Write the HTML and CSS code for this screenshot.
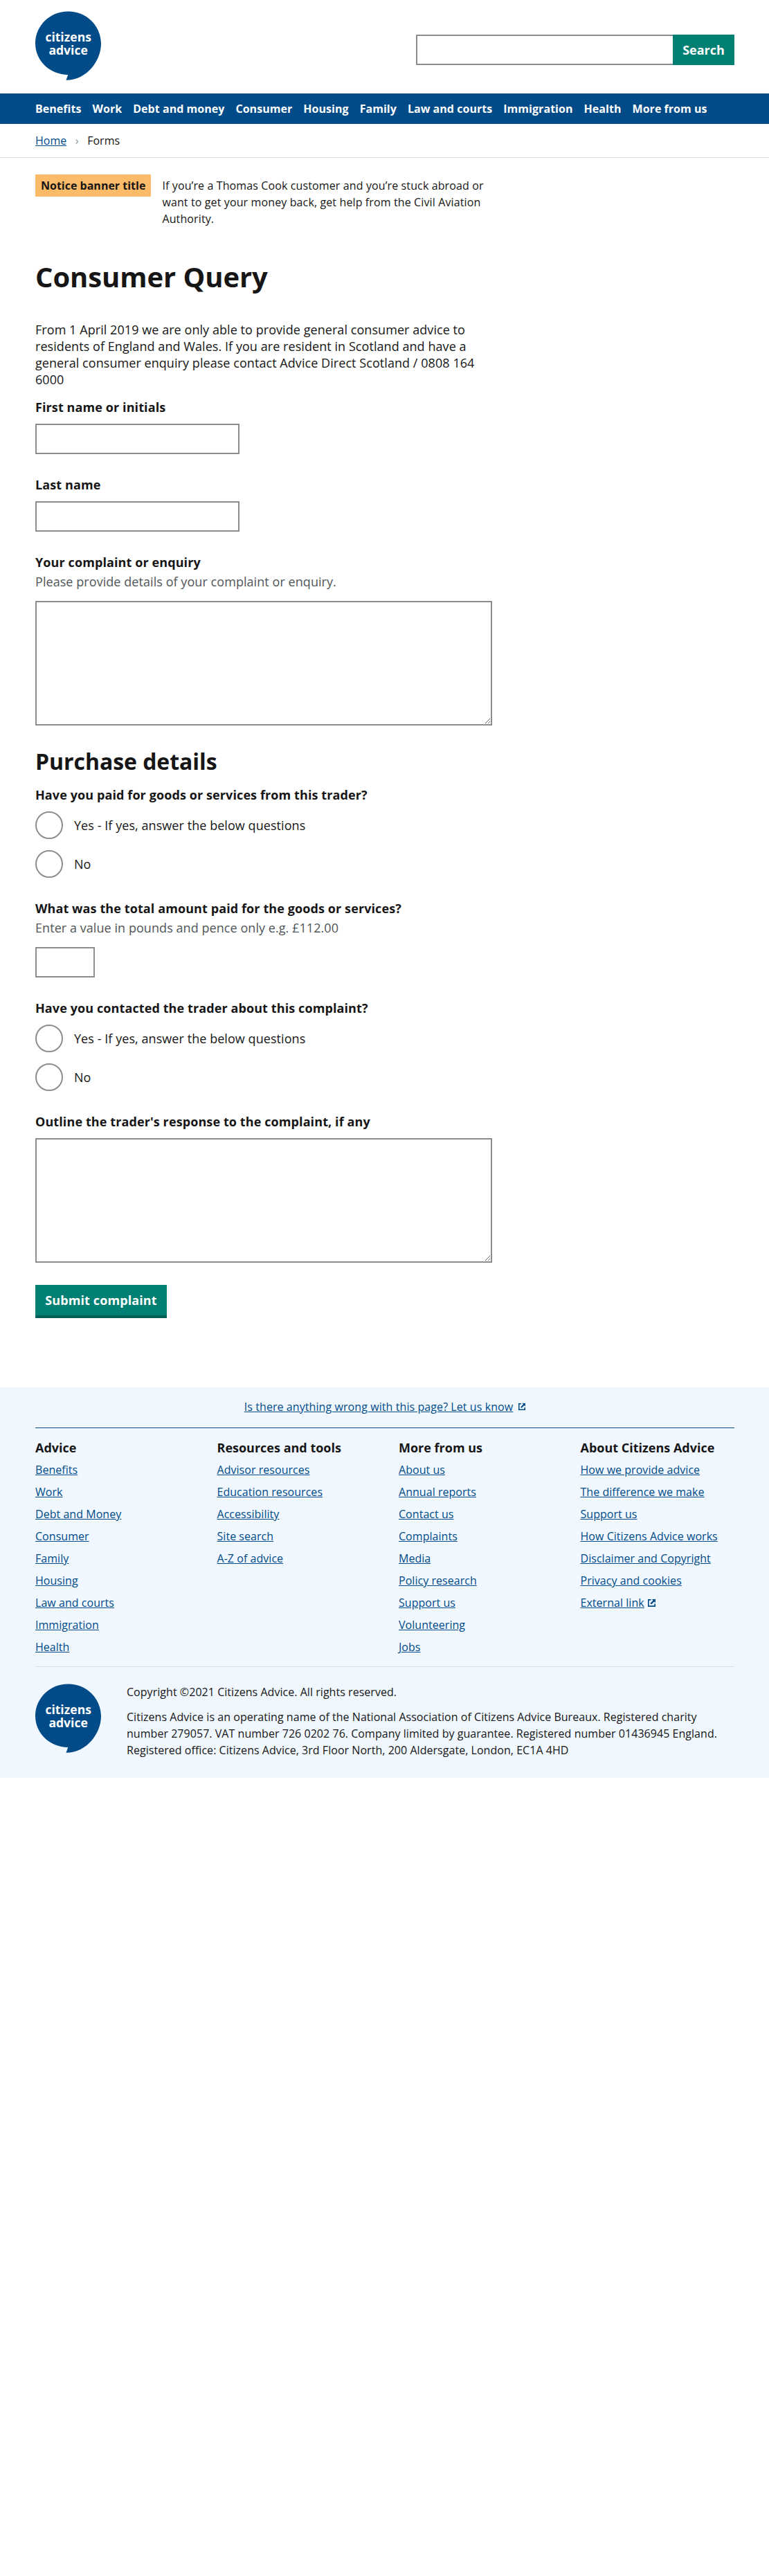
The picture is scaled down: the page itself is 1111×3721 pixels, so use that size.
FILE: index.html
```html
<!DOCTYPE html>
<html lang="en">
<head>
<meta charset="utf-8">
<title>Consumer Query</title>
<link rel="stylesheet" href="styles.css">
</head>
<body>
<header class="header container">
  <a href="#" class="logo-link"><svg class="logo" viewBox="0 0 95 100" role="img" aria-label="Citizens Advice">
    <path fill="#004b88" d="M47.5 0.4C73.7 0.4 95 20.8 95 47.3C95 71 75 99.8 44.5 99.8L47.3 92C20.5 92 0 71 0 46.8C0 21 21 0.4 47.5 0.4Z"/>
    <text x="14.4" y="44" textLength="66.5" lengthAdjust="spacingAndGlyphs">citizens</text>
    <text x="19.4" y="62.5" textLength="56.5" lengthAdjust="spacingAndGlyphs">advice</text>
  </svg></a>
  <form class="search">
    <input class="search-input" type="search" aria-label="Search">
    <button class="search-button" type="button">Search</button>
  </form>
</header>

<nav class="nav">
  <div class="nav-list container">
    <a href="#">Benefits</a><a href="#">Work</a><a href="#">Debt and money</a><a href="#">Consumer</a><a href="#">Housing</a><a href="#">Family</a><a href="#">Law and courts</a><a href="#">Immigration</a><a href="#">Health</a><a href="#">More from us</a>
  </div>
</nav>

<div class="breadcrumbs">
  <div class="container crumb-list"><a href="#">Home</a><span class="crumb-sep">›</span><span>Forms</span></div>
</div>

<main class="container">
  <div class="notice">
    <strong class="notice-title">Notice banner title</strong>
    <p class="notice-body">If you’re a Thomas Cook customer and you’re stuck abroad or want to get your money back, get help from the Civil Aviation Authority.</p>
  </div>

  <h1 class="title">Consumer Query</h1>

  <form class="form">
    <p class="intro">From 1 April 2019 we are only able to provide general consumer advice to residents of England and Wales. If you are resident in Scotland and have a general consumer enquiry please contact Advice Direct Scotland / 0808 164 6000</p>

    <div class="field">
      <label class="label" for="first">First name or initials</label>
      <input class="input" id="first" type="text">
    </div>
    <div class="field">
      <label class="label" for="last">Last name</label>
      <input class="input" id="last" type="text">
    </div>
    <div class="field">
      <label class="label" for="complaint">Your complaint or enquiry</label>
      <p class="hint">Please provide details of your complaint or enquiry.</p>
      <textarea class="textarea" id="complaint"></textarea>
    </div>

    <h2 class="subtitle">Purchase details</h2>

    <fieldset class="field">
      <legend class="label">Have you paid for goods or services from this trader?</legend>
      <label class="radio"><input type="radio" name="paid">Yes - If yes, answer the below questions</label>
      <label class="radio"><input type="radio" name="paid">No</label>
    </fieldset>
    <div class="field">
      <label class="label" for="amount">What was the total amount paid for the goods or services?</label>
      <p class="hint">Enter a value in pounds and pence only e.g. £112.00</p>
      <input class="input input-short" id="amount" type="text">
    </div>
    <fieldset class="field">
      <legend class="label">Have you contacted the trader about this complaint?</legend>
      <label class="radio"><input type="radio" name="contacted">Yes - If yes, answer the below questions</label>
      <label class="radio"><input type="radio" name="contacted">No</label>
    </fieldset>
    <div class="field">
      <label class="label" for="response">Outline the trader's response to the complaint, if any</label>
      <textarea class="textarea" id="response"></textarea>
    </div>

    <button class="submit" type="button">Submit complaint</button>
  </form>
</main>

<footer class="footer">
  <div class="container">
    <p class="feedback"><a href="#">Is there anything wrong with this page? Let us know</a><svg class="icon icon-feedback" viewBox="0 0 10 10"><path d="M0 0H4V1.5H1.5V8.5H8.5V6H10V10H0ZM5.3 0H10V4.7L8.4 3.1L4.6 6.9L3.1 5.4L6.9 1.6Z"/></svg></p>
    <div class="footer-nav">
      <div>
        <h2 class="footer-title">Advice</h2>
        <ul class="footer-links">
          <li><a href="#">Benefits</a></li><li><a href="#">Work</a></li><li><a href="#">Debt and Money</a></li><li><a href="#">Consumer</a></li><li><a href="#">Family</a></li><li><a href="#">Housing</a></li><li><a href="#">Law and courts</a></li><li><a href="#">Immigration</a></li><li><a href="#">Health</a></li>
        </ul>
      </div>
      <div>
        <h2 class="footer-title">Resources and tools</h2>
        <ul class="footer-links">
          <li><a href="#">Advisor resources</a></li><li><a href="#">Education resources</a></li><li><a href="#">Accessibility</a></li><li><a href="#">Site search</a></li><li><a href="#">A-Z of advice</a></li>
        </ul>
      </div>
      <div>
        <h2 class="footer-title">More from us</h2>
        <ul class="footer-links">
          <li><a href="#">About us</a></li><li><a href="#">Annual reports</a></li><li><a href="#">Contact us</a></li><li><a href="#">Complaints</a></li><li><a href="#">Media</a></li><li><a href="#">Policy research</a></li><li><a href="#">Support us</a></li><li><a href="#">Volunteering</a></li><li><a href="#">Jobs</a></li>
        </ul>
      </div>
      <div>
        <h2 class="footer-title">About Citizens Advice</h2>
        <ul class="footer-links">
          <li><a href="#">How we provide advice</a></li><li><a href="#">The difference we make</a></li><li><a href="#">Support us</a></li><li><a href="#">How Citizens Advice works</a></li><li><a href="#">Disclaimer and Copyright</a></li><li><a href="#">Privacy and cookies</a></li><li><a href="#">External link</a><svg class="icon" viewBox="0 0 10 10"><path d="M0 0H4V1.5H1.5V8.5H8.5V6H10V10H0ZM5.3 0H10V4.7L8.4 3.1L4.6 6.9L3.1 5.4L6.9 1.6Z"/></svg></li>
        </ul>
      </div>
    </div>
    <div class="legal">
      <svg class="logo" viewBox="0 0 95 100" role="img" aria-label="Citizens Advice">
        <path fill="#004b88" d="M47.5 0.4C73.7 0.4 95 20.8 95 47.3C95 71 75 99.8 44.5 99.8L47.3 92C20.5 92 0 71 0 46.8C0 21 21 0.4 47.5 0.4Z"/>
        <text x="14.4" y="44" textLength="66.5" lengthAdjust="spacingAndGlyphs">citizens</text>
        <text x="19.4" y="62.5" textLength="56.5" lengthAdjust="spacingAndGlyphs">advice</text>
      </svg>
      <div class="legal-text">
        <p>Copyright ©2021 Citizens Advice. All rights reserved.</p>
        <p>Citizens Advice is an operating name of the National Association of Citizens Advice Bureaux. Registered charity number 279057. VAT number 726 0202 76. Company limited by guarantee. Registered number 01436945 England. Registered office: Citizens Advice, 3rd Floor North, 200 Aldersgate, London, EC1A 4HD</p>
      </div>
    </div>
  </div>
</footer>
</body>
</html>
```
FILE: styles.css
```css
*, *::before, *::after { box-sizing: border-box; }

body {
  margin: 0;
  background: #fff;
  color: #161616;
  font: 16px/24px "Open Sans", sans-serif;
}

h1, h2, p, ul, fieldset { margin: 0; padding: 0; }
a { color: #004b88; text-decoration: underline; }
button, input, textarea { font: inherit; }

.container { width: 1010px; margin: 0 50px 0 51px; }

.header { display: flex; justify-content: space-between; height: 135px; padding-top: 16px; }
.logo { display: block; flex: none; width: 95px; height: 100px; fill: #fff; font-size: 17.5px; font-weight: 700; }
.search { display: flex; width: 460px; height: 44px; margin-top: 34px; }
.search-input { flex: 1; min-width: 0; padding: 0 8px; border: 2px solid #8b8d91; border-right: 0; border-radius: 0; background: #fff; appearance: none; }
.search-button { width: 89px; padding: 0; border: 0; background: #008073; color: #fff; font-size: 18px; font-weight: 700; }

.nav { background: #004b88; }
.nav-list { display: flex; gap: 16px; height: 44px; align-items: center; white-space: nowrap; letter-spacing: 0.04px; }
.nav-list a { color: #fff; font-weight: 700; text-decoration: none; }

.breadcrumbs { border-bottom: 1px solid #e0e0e0; }
.crumb-list { display: flex; height: 48px; align-items: center; }
.crumb-sep { width: 30px; text-align: center; color: #8b8d91; }

.notice { display: flex; gap: 16px; align-items: flex-start; padding-top: 24px; }
.notice-title { flex: none; padding: 5px 8px; background: #fcbb69; line-height: 22px; }
.notice-body { width: 490px; padding-top: 4px; letter-spacing: 0.12px; }

.title { margin: 46px 0 38px; font-size: 40px; line-height: 52px; letter-spacing: -0.08px; }
.form { width: 660px; font-size: 18px; letter-spacing: 0.06px; }
.intro { margin-bottom: 16px; }
.field { display: block; min-width: 0; margin-bottom: 32px; border: 0; }
.label { display: block; padding: 0; font-weight: 700; letter-spacing: 0.1px; }
.hint { margin: 4px 0 16px; color: #505558; }
.input, .textarea { display: block; margin-top: 12px; padding: 8px; border: 2px solid #8b8d91; border-radius: 0; background: #fff; }
.input { width: 295px; height: 44px; }
.input-short { width: 86px; }
.textarea { width: 660px; height: 180px; }
.subtitle { margin: -18px 0 14px; padding-top: 16px; font-size: 32px; line-height: 44px; letter-spacing: -0.05px; }

.radio { display: flex; gap: 16px; align-items: center; height: 40px; margin-top: 12px; }
.radio + .radio { margin-top: 16px; }
.radio input { appearance: none; width: 40px; height: 40px; margin: 0; border: 2px solid #8b8d91; border-radius: 50%; background: #fff; }

.submit { display: block; width: 190px; height: 48px; padding: 0; border: 0; border-bottom: 4px solid #005f56; background: #008073; color: #fff; font-weight: 700; letter-spacing: 0.1px; }

.footer { height: 564px; margin-top: 100px; background: #f0f7ff; }
.feedback { display: flex; justify-content: center; align-items: center; height: 59px; padding-bottom: 2px; border-bottom: 1px solid #004b88; letter-spacing: 0.08px; }
.icon { display: inline-block; width: 11px; height: 11px; margin-left: 5px; fill: #004b88; }
.icon-feedback { width: 10px; height: 10px; margin-left: 8px; }
.footer-nav { display: grid; grid-template-columns: repeat(4, 222.5px); gap: 40px; height: 345px; padding-top: 16px; border-bottom: 1px solid #e0e0e0; white-space: nowrap; }
.footer-title { font-size: 18px; line-height: 24px; }
.footer-links { list-style: none; letter-spacing: 0.04px; }
.footer-links li { height: 24px; margin-top: 8px; }
.legal { display: flex; gap: 37px; padding-top: 24px; }
.legal-text { letter-spacing: 0.04px; }
.legal-text p { margin-bottom: 12px; }
```
